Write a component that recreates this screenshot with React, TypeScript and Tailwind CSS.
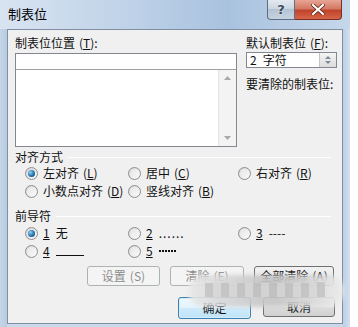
import React from "react";

const font = { fontFamily: '"Noto Sans CJK SC", "Noto Sans", sans-serif' };

function Radio({ checked }: { checked?: boolean }) {
  return (
    <div className="w-[13px] h-[13px] rounded-full border border-[#8e8f8f] bg-[linear-gradient(135deg,#d4d4d4,#fbfbfb)] flex items-center justify-center shrink-0">
      {checked ? (
        <div className="w-[7px] h-[7px] rounded-full bg-[radial-gradient(circle_at_35%_35%,#8fd0f6,#1c6aa6_60%,#0d3f6e)]" />
      ) : (
        <div className="w-[9px] h-[9px] rounded-full bg-[linear-gradient(135deg,#e6e6e6,#f8f8f8)]" />
      )}
    </div>
  );
}

function RadioItem({ checked, children }: { checked?: boolean; children: React.ReactNode }) {
  return (
    <div className="flex items-center gap-[5px] h-[18px]">
      <Radio checked={checked} />
      <span className="text-[12px] leading-[14px] text-[#111] whitespace-nowrap flex items-center">{children}</span>
    </div>
  );
}

function Key({ k, plain }: { k: string; plain?: boolean }) {
  return (
    <span className="ml-[4px]">
      (<span className={plain ? "" : "underline"}>{k}</span>)
    </span>
  );
}

function Btn({
  children,
  w,
  disabled,
  def,
}: {
  children: React.ReactNode;
  w: string;
  disabled?: boolean;
  def?: boolean;
}) {
  const base = "flex items-center justify-center rounded-[3px] text-[12px] leading-[14px] ";
  if (disabled)
    return (
      <div className={base + w + " h-[20px] border border-[#adb2b5] bg-[#f4f4f4] text-[#8c8c8c]"}>{children}</div>
    );
  if (def)
    return (
      <div className={base + w + " h-[22px] border border-[#3c7fb1] bg-[linear-gradient(#eef8fd,#e2f3fc_50%,#cdebfc_50%,#bfe3f7)] text-[#111] shadow-[inset_0_0_0_1px_#d6eefb]"}>
        {children}
      </div>
    );
  return (
    <div className={base + w + " h-[20px] border border-[#707070] bg-[linear-gradient(#f2f2f2,#ebebeb_50%,#dddddd_50%,#cfcfcf)] text-[#111]"}>
      {children}
    </div>
  );
}

export default function App() {
  return (
    <div className="w-[358px] h-[327px] overflow-hidden relative bg-white" style={font}>
      <div className="w-[350px] h-[327px] flex flex-col bg-[#c9d9eb]">
        {/* Title bar */}
        <div className="h-[29px] flex items-start relative bg-[linear-gradient(90deg,#d9e4f1,#bcd0e7_40%,#a9c2df_65%,#c6d7ea)]">
          <span className="ml-[8px] mt-[6px] text-[13px] leading-[16px] text-black">制表位</span>
          <div className="ml-auto mr-[8px] flex h-[20px]">
            <div className="w-[28px] h-[20px] border border-[#5c6e84] border-t-0 rounded-bl-[4px] bg-[linear-gradient(#e3e9f0,#c9d4e1_50%,#b4c3d4_50%,#c7d3e0)] flex items-center justify-center">
              <span className="text-[13px] font-bold leading-none text-[#3c4a5c] [text-shadow:0_0_2px_#fff]" style={{ fontFamily: '"DejaVu Sans", sans-serif' }}>?</span>
            </div>
            <div className="w-[47px] h-[20px] border border-[#7c2e22] border-t-0 border-l-0 rounded-br-[4px] bg-[linear-gradient(#e8a493,#d27a64_45%,#c2432b_55%,#d5654a)] flex items-center justify-center">
              <svg width="14" height="11" viewBox="0 0 14 11">
                <path d="M2 1 L12 10 M12 1 L2 10" stroke="#5a1a10" strokeWidth="3.6" strokeLinecap="square" />
                <path d="M2 1 L12 10 M12 1 L2 10" stroke="#ffffff" strokeWidth="2.2" strokeLinecap="square" />
              </svg>
            </div>
          </div>
        </div>
        <div className="flex flex-1">
          <div className="w-[7px] bg-[linear-gradient(90deg,#c5d5e7,#b8cbe0)]" />
          {/* Content */}
          <div className="w-[336px] h-[295px] bg-[#f0f0f0] border border-[#7f8ea0] text-[#111] flex flex-col pl-[7px] pr-[5px]">
            {/* Top section */}
            <div className="flex pt-[5px]">
              <div className="w-[222px] flex flex-col">
                <div className="text-[12px] leading-[16px]">
                  制表位位置<Key k="T" />:
                </div>
                <div className="mt-[2px] h-[17px] border border-[#828790] border-b-[#a0a0a0] bg-white" />
                <div className="h-[77px] border border-[#828790] border-t-0 bg-white flex justify-end">
                  <div className="w-[18px] h-full bg-[#f3f3f3] border-l border-[#e4e4e4] flex flex-col items-center justify-between py-[6px]">
                    <svg width="7" height="4" viewBox="0 0 7 4"><path d="M0 4 L3.5 0 L7 4 Z" fill="#a9a9a9" /></svg>
                    <svg width="7" height="4" viewBox="0 0 7 4"><path d="M0 0 L3.5 4 L7 0 Z" fill="#a9a9a9" /></svg>
                  </div>
                </div>
              </div>
              <div className="ml-[9px] w-[91px] flex flex-col">
                <div className="text-[12px] leading-[16px] whitespace-nowrap">
                  默认制表位<Key k="F" />:
                </div>
                <div className="mt-[1px] h-[16px] border border-[#828790] bg-white flex items-center">
                  <span className="ml-[3px] text-[12px] leading-[14px] flex-1">
                    2<span className="ml-[6px]">字符</span>
                  </span>
                  <div className="w-[17px] h-[14px] bg-[linear-gradient(#f4f4f4,#dcdcdc)] border-l border-[#c6c6c6] flex flex-col items-center justify-center gap-[2px]">
                    <svg width="6" height="3" viewBox="0 0 6 3"><path d="M0 3 L3 0 L6 3 Z" fill="#7d8a99" /></svg>
                    <svg width="6" height="3" viewBox="0 0 6 3"><path d="M0 0 L3 3 L6 0 Z" fill="#7d8a99" /></svg>
                  </div>
                </div>
                <div className="mt-[9px] text-[12px] leading-[14px] whitespace-nowrap">要清除的制表位:</div>
              </div>
            </div>

            {/* Alignment group */}
            <div className="mt-[3px] flex items-center h-[14px] pr-[6px]">
              <span className="text-[12px] leading-[14px] whitespace-nowrap">对齐方式</span>
              <div className="ml-[5px] flex-1 h-px bg-[#d5dfe5] border-b border-white" />
            </div>
            <div className="pl-[10px] grid grid-cols-[103px_110px_1fr]">
              <RadioItem checked>左对齐<Key k="L" /></RadioItem>
              <RadioItem>居中<Key k="C" /></RadioItem>
              <RadioItem>右对齐<Key k="R" /></RadioItem>
              <RadioItem>小数点对齐<Key k="D" /></RadioItem>
              <RadioItem>竖线对齐<Key k="B" /></RadioItem>
              <div />
            </div>

            {/* Leader group */}
            <div className="mt-[9px] flex items-center h-[14px] pr-[6px]">
              <span className="text-[12px] leading-[14px] whitespace-nowrap">前导符</span>
              <div className="ml-[5px] flex-1 h-px bg-[#d5dfe5] border-b border-white" />
            </div>
            <div className="mt-[1px] pl-[10px] grid grid-cols-[103px_110px_1fr]">
              <RadioItem checked>
                <span className="underline">1</span>
                <span className="ml-[6px]">无</span>
              </RadioItem>
              <RadioItem>
                <span className="underline">2</span>
                <span className="ml-[6px] tracking-[1px]">......</span>
              </RadioItem>
              <RadioItem>
                <span className="underline">3</span>
                <span className="ml-[6px]">----</span>
              </RadioItem>
              <RadioItem>
                <span className="underline">4</span>
                <span className="ml-[6px] inline-block w-[28px] h-[9px] border-b border-[#111]" />
              </RadioItem>
              <RadioItem>
                <span className="underline">5</span>
                <span className="ml-[6px] inline-block w-[18px] h-[2px] bg-[repeating-linear-gradient(90deg,#111_0px,#111_2px,transparent_2px,transparent_3px)]" />
              </RadioItem>
              <div />
            </div>

            {/* Buttons */}
            <div className="mt-[6px] flex justify-end gap-[10px] pr-[3px]">
              <Btn w="w-[73px]" disabled>设置<Key k="S" plain /></Btn>
              <Btn w="w-[74px]" disabled>清除<Key k="E" plain /></Btn>
              <Btn w="w-[80px]">全部清除<Key k="A" /></Btn>
            </div>
            <div className="mt-[11px] flex justify-end gap-[12px] pr-[2px]">
              <Btn w="w-[73px]" def>确定</Btn>
              <Btn w="w-[72px]">取消</Btn>
            </div>
          </div>
          <div className="w-[7px] bg-[linear-gradient(90deg,#bccfe4,#d3e0ee)]" />
        </div>
      </div>

      {/* Watermark overlay */}
      <div className="absolute left-[188px] top-[275px] w-[156px] h-[32px] rounded-full bg-[linear-gradient(90deg,#e8e8e8,#d2d2d2_30%,#c4c4c4_55%,#d9d9d9_80%,#ececec)] opacity-90 blur-[2px]" />
      <div className="absolute left-[205px] top-[283px] w-[120px] h-[14px] bg-[repeating-linear-gradient(90deg,#bdbdbd_0px,#bdbdbd_8px,#d6d6d6_8px,#d6d6d6_16px)] opacity-70" />
    </div>
  );
}
